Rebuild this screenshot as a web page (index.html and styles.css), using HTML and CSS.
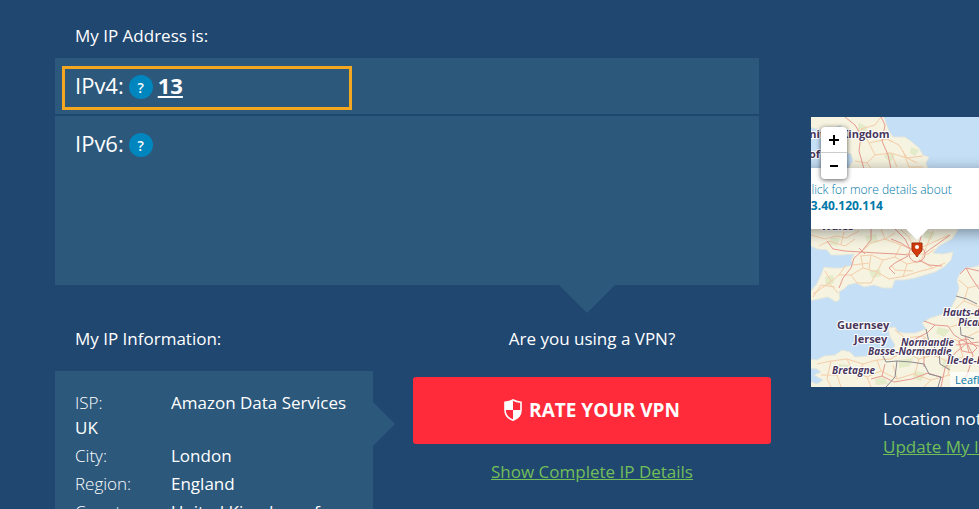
FILE: index.html
```html
<!DOCTYPE html>
<html lang="en">
<head>
    <meta charset="UTF-8">
    <title>My IP Address</title>
    <link rel="stylesheet" href="styles.css">
</head>
<body>

<div class="page">
    <main class="main">
        <h2>My IP Address is:</h2>
        <div class="ip-box">
            <div class="ip-row ipv4">
                <span>IPv4:</span>
                <button class="help" type="button" aria-label="What is IPv4?">?</button>
                <a class="ip" href="#">13</a>
                <div class="highlight"></div>
            </div>
            <div class="ip-row ipv6">
                <span>IPv6:</span>
                <button class="help" type="button" aria-label="What is IPv6?">?</button>
            </div>
        </div>

        <div class="columns">
            <section class="info">
                <h2>My IP Information:</h2>
                <div class="info-box">
                    <p><span>ISP:</span>Amazon Data Services UK</p>
                    <p><span>City:</span>London</p>
                    <p><span>Region:</span>England</p>
                    <p><span>Country:</span>United Kingdom of</p>
                </div>
            </section>
            <section class="vpn">
                <h2>Are you using a VPN?</h2>
                <button class="rate" type="button">
                    <svg width="18" height="22" viewBox="0 0 18 22">
                        <path d="M9 1 C6.500 2.500 3.500 3 1 3.200 V11 C1 16 4.500 19.500 9 21.200 C13.500 19.500 17 16 17 11 V3.200 C14.500 3 11.500 2.500 9 1 Z" fill="none" stroke="#fff" stroke-width="1.600"/>
                        <path d="M9 1 C6.500 2.500 3.500 3 1 3.200 V11 H9 Z M9 11 H17 C17 16 13.500 19.500 9 21.200 Z" fill="#fff"/>
                    </svg>
                    RATE YOUR VPN
                </button>
                <a href="#">Show Complete IP Details</a>
            </section>
        </div>
    </main>

    <aside class="side">
        <div class="map">
            <svg class="tiles" width="358" height="270" viewBox="0 0 358 270">
                <!-- land -->
                <g fill="#f6f3e0" stroke="#e3e6dc">
                    <path d="M-2 -2 H72 L75 6 L78 14 L82 20 L94 20 L101 25 L108 31 L112 38 L118 40 L115 46 L118 54 L130 60 L150 70 V108 L147 113 L141 122 L128 129 L122 136 L132 137 L142 135 L140 143 L133 150 L124 155 L114 158 L104 161 L94 163 L84 163 L81 171 L72 171 L63 168 L53 170 L45 166 L37 168 L33 172 L28 175 L29 182 L25 185 L17 180 L8 182 L-2 184 V176 L5 168 L10 158 L13 150 L22 151 L30 151 L42 148 L40 143 L43 137 L31 138 L20 138 L16 133 L6 132 L-2 128 V112 L20 90 V58 L36 53 L42 44 L40 37 L30 34 L30 8 L14 14 L-2 10 Z"/>
                    <path d="M170 148 L163 150 L155 151 L149 156 L146 163 L148 171 L145 181 L140 191 L132 197 L119 201 L111 206 L115 212 L104 216 L94 216 L87 215 L84 210 L77 211 L79 220 L84 228 L80 235 L73 238 L65 237 L56 239 L44 240 L39 235 L31 233 L24 238 L13 239 L6 243 L-2 242 V251 L6 252 L10 255 L3 258 L12 263 L6 267 L-2 264 V272 H170 Z"/>
                </g>
                <!-- woodland -->
                <g fill="#d9e6bb" opacity=".6">
                    <path d="M48 6 L55 9 L58 20 L51 26 L45 18 Z M76 34 L84 38 L80 45 L73 40 Z M100 30 L108 33 L104 39 L99 36 Z M54 119 L65 117 L67 125 L57 127 Z M115 114 L124 116 L120 123 L112 120 Z M14 160 L22 158 L23 166 L15 169 Z M58 154 L69 152 L70 159 L61 161 Z M20 120 L29 121 L26 129 L18 127 Z"/>
                    <path d="M127 210 L139 213 L133 220 L125 216 Z M150 202 L160 200 L158 211 L151 210 Z M88 243 L102 241 L99 249 L88 251 Z M28 247 L38 248 L35 256 L27 254 Z M103 254 L115 256 L110 264 L102 261 Z M132 242 L142 244 L139 252 L131 251 Z M64 262 L73 260 L77 267 L65 268 Z"/>
                </g>
                <!-- minor roads -->
                <g class="roads">
                    <path d="M50 12 L64 8 L70 0 M50 12 L58 26 L76 22 L82 25 M58 26 L64 38 L80 36 L96 41 L112 39 M80 36 L86 50 M64 38 L56 46 L44 44 M96 41 L88 28 L76 22 M92 34 L98 50 L112 50 M56 46 L62 54 M96 41 L106 46"/>
                    <path d="M0 118 L14 122 L26 119 L35 121 L48 114 M8 129 L18 124 L34 129 L44 122 M48 137 L60 126 L74 122 L90 128 L104 133 L116 128 L138 118 M74 122 L70 112 M90 128 L84 140 L72 143 L60 138 L49 139 M84 140 L96 147 L110 144 L122 151 L134 146 M72 143 L66 155 L78 162 L94 159 L110 154 L122 151 M66 155 L52 151 L40 158 L28 158 L18 166 L2 177 M40 158 L46 166 L60 166 L66 155 M28 158 L35 148 M18 166 L27 176 M96 147 L92 160 M52 151 L50 139 M104 133 L98 120 L90 113 M110 144 L116 128 L122 114 M2 180 L10 168 L24 170 M80 148 L84 153 L102 154 M30 127 L33 115 M95 137 L117 137 L124 132 M14 154 L20 164 M60 138 L58 152 M74 122 L84 116 M42 148 L58 146"/>
                    <path d="M84 213 L94 221 L112 219 L122 226 L138 221 L148 224 L168 214 M94 221 L92 234 L80 242 L66 243 L52 247 L36 242 L20 244 L6 247 M92 234 L108 242 L122 238 L136 244 L152 240 L168 245 M66 243 L70 254 L56 260 L42 254 L26 258 L10 258 M70 254 L86 262 L102 257 L120 263 L138 258 L150 268 M42 254 L36 242 M26 258 L30 270 M56 260 L60 270 M108 242 L104 257 M122 238 L120 226 M136 244 L138 258 M152 240 L147 224 M148 163 L157 171 L168 168 M157 171 L153 184 L168 190 M153 184 L143 193 L150 207 L168 202 M150 207 L139 210 M20 244 L16 262 L20 270 M86 262 L82 248 M52 247 L46 262 M120 263 L113 270"/>
                </g>
                <!-- motorways -->
                <g class="motorways">
                    <path d="M34 0 L44 8 L50 18 L48 34 L53 52 M70 0 L74 8 L71 24 L77 38 L80 52"/>
                    <path d="M16 124 L22 132 L34 134 L50 135 L66 136 L86 137 L98 138 M60 112 L60 123 L50 135 L43 141 L40 151 L32 161 L28 171 M48 131 L54 137 M99 132 L94 122 L84 112 M97 139 L84 146 L78 151 L84 157 M114 136 L128 126 L139 118 M108 143 L118 148 L131 149 M107 130 L110 120 L108 112 M80 122 L90 126 L99 132"/>
                    <circle cx="106" cy="137" r="8"/>
                    <path d="M149 157 L155 151 L168 154 M155 151 L160 160 L168 172 M113 204 L124 208 L137 209 L143 218 L156 226 L168 229 M124 208 L116 216 L106 221 L93 230 M156 226 L144 236 L134 251 L130 270 M156 226 L162 238 L158 252 L151 270 M71 259 L83 265 L101 262 L117 256 L132 261 M113 221 L113 250 M71 259 L60 262 M71 259 L74 247 M148 224 L157 222 L166 231 L161 236 L151 234 Z M154 218 L158 236 M145 228 L168 225"/>
                </g>
                <!-- borders -->
                <path d="M145 179 L156 182 L166 187 M149 205 L150 218 L163 222 M115 212 L118 225 L128 235 L129 247 L139 253 M72 239 L75 245 L86 244 L100 245 L113 247 L118 257 L130 260 L127 270 M86 244 L84 260 L75 270" fill="none" stroke="#8d8890"/>
                <g class="country">
                    <text x="-10" y="21">United Kingdom</text>
                    <text x="-2" y="41">of</text>
                    <text x="10" y="113">Wales</text>
                    <text x="26" y="212">Guernsey</text>
                    <text x="43" y="226">Jersey</text>
                </g>
                <g class="region">
                    <text x="132" y="199">Hauts-de-France</text>
                    <text x="147" y="209">Picardie</text>
                    <text x="90" y="229">Normandie</text>
                    <text x="57" y="238">Basse-Normandie</text>
                    <text x="136" y="247">Île-de-France</text>
                    <text x="21" y="257">Bretagne</text>
                </g>
            </svg>
            <svg class="pin" width="12" height="16" viewBox="0 0 12 16">
                <path d="M1 1 H11 V8 C11 10 8 11 6 15 C4 11 1 10 1 8 Z" fill="#d33a0c" stroke="#a42a08"/>
                <circle cx="6" cy="5" r="2" fill="#fff"/>
            </svg>
            <div class="popup"><a href="#">Click for more details about <b>13.40.120.114</b></a></div>
            <div class="zoom">
                <button type="button" aria-label="Zoom in"><svg width="10" height="10"><path d="M5 0 V10 M0 5 H10" stroke="#000" stroke-width="2"/></svg></button>
                <button type="button" aria-label="Zoom out"><svg width="10" height="10"><path d="M1 5 H9" stroke="#000" stroke-width="2"/></svg></button>
            </div>
            <a class="attribution" href="#">Leaflet</a>
        </div>
        <div class="location">
            <p>Location not accurate?</p>
            <a href="#">Update My IP Location</a>
        </div>
    </aside>
</div>

</body>
</html>
```
FILE: styles.css
```css
* {
    box-sizing: border-box;
    margin: 0;
    padding: 0;
}
html, body {
    height: 100%;
    overflow: hidden;
}
body {
    background: #204770;
    color: #fff;
    font-family: "Open Sans", "Noto Sans", sans-serif;
    font-size: 17px;
    line-height: 25px;
}
button {
    border: 0;
    color: #fff;
    font-family: inherit;
    cursor: pointer;
}
h2 {
    font-size: 17px;
    font-weight: 400;
    line-height: 24px;
}
.page {
    display: flex;
    gap: 40px;
    padding: 24px 0 0 55px;
}
.main {
    flex: 1;
    min-width: 0;
}
.main > h2 {
    padding-left: 20px;
}

.ip-box {
    position: relative;
    margin: 10px 12px 0 0;
}
.ip-box:after {
    content: "";
    position: absolute;
    top: 100%;
    right: 144px;
    border: 28px solid transparent;
    border-top-color: #2c587c;
    border-bottom: 0;
}
.ip-row {
    display: flex;
    gap: 5px;
    position: relative;
    padding: 12px 20px;
    background: #2c587c;
    font-size: 22px;
    line-height: 30px;
}
.ipv4 {
    height: 56px;
    margin-bottom: 2px;
}
.ipv6 {
    height: 169px;
}
.help {
    width: 24px;
    height: 24px;
    margin-top: 5px;
    border-radius: 50%;
    background: #0086be;
    font-size: 14px;
    font-weight: 600;
}
.ip {
    color: #fff;
    font-weight: 700;
}
.highlight {
    position: absolute;
    top: 8px;
    left: 7px;
    width: 290px;
    height: 44px;
    border: 3px solid #f2a71e;
    pointer-events: none;
}

.columns {
    display: flex;
    gap: 40px;
    padding-top: 42px;
}
.info {
    flex: 318;
    min-width: 0;
}
.info h2 {
    padding-left: 20px;
}
.info-box {
    position: relative;
    margin-top: 20px;
    padding: 19px 20px;
    background: #2c587c;
}
.info-box:after {
    content: "";
    position: absolute;
    top: 31px;
    left: 100%;
    border: 22px solid transparent;
    border-left-color: #2c587c;
    border-right: 0;
}
.info-box p {
    margin-bottom: 3px;
}
.info-box span {
    display: inline-block;
    width: 96px;
    font-weight: 300;
}
.vpn {
    flex: 358;
    min-width: 0;
    text-align: center;
}
.vpn a, .location a {
    color: #72bf58;
}
.rate {
    display: flex;
    justify-content: center;
    align-items: center;
    gap: 7px;
    width: 100%;
    height: 67px;
    margin: 26px 0 15px;
    padding-bottom: 2px;
    border-radius: 3px;
    background: #ff2a3a;
    font-size: 19px;
    font-weight: 700;
}

.side {
    flex: 0 0 168px;
    padding-top: 93px;
    overflow: hidden;
    white-space: nowrap;
}
.map {
    position: relative;
    height: 270px;
    overflow: hidden;
    background: #c4dff6;
}
.tiles {
    display: block;
}
.roads, .motorways {
    fill: none;
    stroke: #f5cda9;
}
.motorways {
    stroke: #e79a90;
}
.country, .region {
    fill: #49365c;
    stroke: #fff;
    stroke-width: 2px;
    paint-order: stroke;
    font-size: 11px;
    font-weight: 700;
}
.region {
    font-size: 10px;
    font-style: italic;
}
.pin {
    position: absolute;
    top: 125px;
    left: 100px;
}
.popup {
    position: absolute;
    top: 51px;
    left: -27px;
    width: 268px;
    height: 61px;
    padding: 14px 20px;
    background: #fff;
    box-shadow: 0 3px 14px rgba(0, 0, 0, 0.4);
    font-size: 12px;
    line-height: 16px;
}
.popup:after {
    content: "";
    position: absolute;
    top: 100%;
    left: 122px;
    border: 11px solid transparent;
    border-top-color: #fff;
    border-bottom: 0;
}
.popup a {
    color: #0078a8;
    font-weight: 350;
    text-decoration: none;
}
.popup b {
    display: block;
    font-weight: 700;
}
.zoom {
    position: absolute;
    top: 10px;
    left: 10px;
    width: 26px;
    border-radius: 4px;
    background: #fff;
    box-shadow: 0 1px 5px rgba(0, 0, 0, 0.65);
}
.zoom button {
    display: flex;
    justify-content: center;
    align-items: center;
    width: 26px;
    height: 26px;
    background: none;
}
.zoom button:first-child {
    border-bottom: 1px solid #ccc;
}
.attribution {
    position: absolute;
    bottom: 0;
    left: 139px;
    padding: 0 5px;
    background: rgba(255, 255, 255, 0.7);
    color: #0078a8;
    font-size: 11px;
    line-height: 15px;
    text-decoration: none;
}
.location {
    padding: 19px 0 0 72px;
}
.location p {
    margin-bottom: 3px;
}
```
